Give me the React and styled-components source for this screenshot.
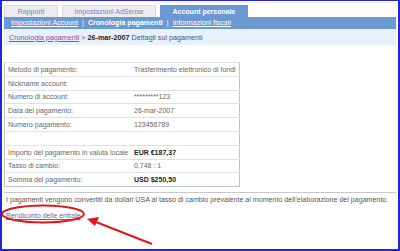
import React from "react";
import styled, { createGlobalStyle } from "styled-components";

const Global = createGlobalStyle`
  html, body {
    margin: 0;
    padding: 0;
    background: #ffffff;
  }
  body {
    font-family: "Liberation Sans", Arial, sans-serif;
  }
`;

const Frame = styled.div`
  position: relative;
  width: 400px;
  height: 251px;
  box-sizing: border-box;
  border: 2px solid #2424dc;
  border-top-width: 1px;
  padding: 4px 2px 0 2px;
  background: #fff;
  overflow: hidden;
`;

const Tabs = styled.div`
  display: flex;
  gap: 4px;
  height: 12px;
  align-items: flex-end;
`;

const Tab = styled.div`
  height: 12px;
  box-sizing: border-box;
  width: ${(p) => p.$w}px;
  display: flex;
  align-items: center;
  justify-content: center;
  font-size: 7px;
  font-weight: ${(p) => (p.$active ? "bold" : "normal")};
  color: ${(p) => (p.$active ? "#ffffff" : "#7383c4")};
  background: ${(p) => (p.$active ? "#6b98d0" : "#ececec")};
  border: 1px solid ${(p) => (p.$active ? "#6b98d0" : "#dcdcdc")};
  border-bottom: none;
`;

const SubNav = styled.div`
  height: 12px;
  background: #6b98d0;
  display: flex;
  align-items: center;
  padding-left: 7px;
  font-size: 7.1px;
  color: #fff;
  gap: 4px;
`;

const NavLink = styled.span`
  color: #fff;
  text-decoration: ${(p) => (p.$current ? "none" : "underline")};
  font-weight: ${(p) => (p.$current ? "bold" : "normal")};
`;

const Crumbs = styled.div`
  height: 16px;
  background: #e6f1fc;
  display: flex;
  align-items: center;
  padding-left: 5px;
  font-size: 7.2px;
  color: #555;
  gap: 2px;
`;

const VisitedLink = styled.span`
  color: #85569e;
  text-decoration: underline;
`;

const Strong = styled.b`
  color: #222;
`;

const Table = styled.table`
  margin-top: 17px;
  width: 236px;
  border-collapse: collapse;
  border: 1px solid #b7c2d6;
  font-size: 7px;
  color: #666;
`;

const Row = styled.tr`
  height: 13.8px;
  border-top: 1px solid #e0e0e0;
`;

const Label = styled.td`
  padding: 0 0 0 3px;
  width: 124px;
  white-space: nowrap;
`;

const Value = styled.td`
  padding: 0 0 0 2px;
  white-space: nowrap;
  font-weight: ${(p) => (p.$bold ? "bold" : "normal")};
  color: ${(p) => (p.$bold ? "#222" : "#666")};
`;

const Rule = styled.div`
  margin-top: 5px;
  height: 1px;
  background: #c8c8c8;
  width: 392px;
`;

const Note = styled.p`
  margin: 3px 0 0 2px;
  font-size: 7.1px;
  color: #555;
  white-space: nowrap;
`;

const ReportLink = styled.a`
  display: inline-block;
  margin: 6px 0 0 2px;
  font-size: 6.9px;
  color: #85569e;
  text-decoration: underline;
`;

const Annotation = styled.svg`
  position: absolute;
  left: -2px;
  top: -1px;
  width: 400px;
  height: 251px;
  pointer-events: none;
`;

const rows = [
  ["Metodo di pagamento:", "Trasferimento elettronico di fondi"],
  ["Nickname account:", ""],
  ["Numero di account:", "*********123"],
  ["Data del pagamento:", "26-mar-2007"],
  ["Numero pagamento:", "123456789"],
  null,
  ["Importo del pagamento in valuta locale", "EUR €187,37", true],
  ["Tasso di cambio:", "0,748 : 1"],
  ["Somma del pagamento:", "USD $250,50", true],
];

export default function App() {
  return (
    <>
      <Global />
      <Frame>
        <Tabs>
          <Tab $w={54}>Rapporti</Tab>
          <Tab $w={94}>Impostazioni AdSense</Tab>
          <Tab $w={88} $active>
            Account personale
          </Tab>
        </Tabs>
        <SubNav>
          <NavLink>Impostazioni Account</NavLink>
          <span>|</span>
          <NavLink $current>Cronologia pagamenti</NavLink>
          <span>|</span>
          <NavLink>Informazioni fiscali</NavLink>
        </SubNav>
        <Crumbs>
          <VisitedLink>Cronologia pagamenti</VisitedLink>
          <span>&gt;</span>
          <Strong>26-mar-2007</Strong>
          <span>Dettagli sui pagamenti</span>
        </Crumbs>
        <Table>
          <tbody>
            {rows.map((r, i) =>
              r ? (
                <Row key={i}>
                  <Label>{r[0]}</Label>
                  <Value $bold={r[2]}>{r[1]}</Value>
                </Row>
              ) : (
                <Row key={i}>
                  <td colSpan={2} />
                </Row>
              )
            )}
          </tbody>
        </Table>
        <Rule />
        <Note>
          I pagamenti vengono convertiti da dollari USA al tasso di cambio prevalente al momento dell'elaborazione del pagamento.
        </Note>
        <ReportLink>Rendiconto delle entrate</ReportLink>
        <Annotation viewBox="0 0 400 251">
          <ellipse cx="43" cy="214" rx="41" ry="8.5" fill="none" stroke="#e01818" strokeWidth="2" />
          <line x1="152" y1="244" x2="96" y2="222" stroke="#e01818" strokeWidth="2" />
          <polygon points="87,219 99,217 95,226" fill="#e01818" />
        </Annotation>
      </Frame>
    </>
  );
}
